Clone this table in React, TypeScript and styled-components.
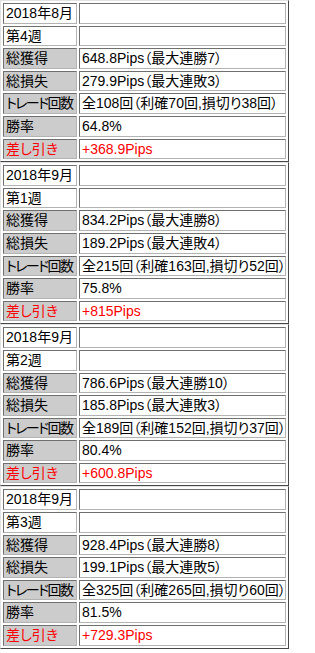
import React from 'react';
import styled, {createGlobalStyle} from 'styled-components';

type Week = {
  month: string;
  week: string;
  gain: string;
  loss: string;
  trades: string;
  rate: string;
  net: string;
};

const weeks: Week[] = [
  {
    month: '2018年8月',
    week: '第4週',
    gain: '648.8Pips（最大連勝7）',
    loss: '279.9Pips（最大連敗3）',
    trades: '全108回（利確70回,損切り38回）',
    rate: '64.8%',
    net: '+368.9Pips',
  },
  {
    month: '2018年9月',
    week: '第1週',
    gain: '834.2Pips（最大連勝8）',
    loss: '189.2Pips（最大連敗4）',
    trades: '全215回（利確163回,損切り52回）',
    rate: '75.8%',
    net: '+815Pips',
  },
  {
    month: '2018年9月',
    week: '第2週',
    gain: '786.6Pips（最大連勝10）',
    loss: '185.8Pips（最大連敗3）',
    trades: '全189回（利確152回,損切り37回）',
    rate: '80.4%',
    net: '+600.8Pips',
  },
  {
    month: '2018年9月',
    week: '第3週',
    gain: '928.4Pips（最大連勝8）',
    loss: '199.1Pips（最大連敗5）',
    trades: '全325回（利確265回,損切り60回）',
    rate: '81.5%',
    net: '+729.3Pips',
  },
];

const GlobalStyle = createGlobalStyle`
  html, body {
    margin: 0;
    padding: 0;
    background: #fff;
  }
  body {
    font-family: "Liberation Sans", "Noto Sans CJK JP", sans-serif;
    font-size: 14px;
    color: #000;
  }
`;

function WeekTable({data}: {data: Week}) {
  return (
    <Report.Table>
      <tbody>
        <tr>
          <Report.Label>{data.month}</Report.Label>
          <Report.Value />
        </tr>
        <tr>
          <Report.Label>{data.week}</Report.Label>
          <Report.Value />
        </tr>
        <tr>
          <Report.Label $shaded>総獲得</Report.Label>
          <Report.Value>{data.gain}</Report.Value>
        </tr>
        <tr>
          <Report.Label $shaded>総損失</Report.Label>
          <Report.Value>{data.loss}</Report.Value>
        </tr>
        <tr>
          <Report.Label $shaded $tight>
            トレード回数
          </Report.Label>
          <Report.Value>{data.trades}</Report.Value>
        </tr>
        <tr>
          <Report.Label $shaded>勝率</Report.Label>
          <Report.Value>{data.rate}</Report.Value>
        </tr>
        <tr>
          <Report.Label $shaded $red>
            差し引き
          </Report.Label>
          <Report.Value $red>{data.net}</Report.Value>
        </tr>
      </tbody>
    </Report.Table>
  );
}

export default function App() {
  return (
    <>
      <GlobalStyle />
      <Report.Page>
        {weeks.map((w, idx) => (
          <WeekTable key={idx} data={w} />
        ))}
      </Report.Page>
    </>
  );
}

const Report = {
  Page: styled.div`
    display: flex;
    flex-direction: column;
    width: 315px;
  `,
  Table: styled.table`
    width: 289px;
    table-layout: fixed;
    border-collapse: separate;
    border-spacing: 2px;
    border-style: solid;
    border-width: 1px;
    border-color: #e2e2e2 #474747 #474747 #e2e2e2;
  `,
  Label: styled.td<{$shaded?: boolean; $red?: boolean; $tight?: boolean}>`
    box-sizing: border-box;
    width: 74px;
    padding: 1px 1px 1px 2px;
    line-height: 16.6px;
    white-space: nowrap;
    overflow: hidden;
    font-feature-settings: 'palt';
    letter-spacing: ${(p) => (p.$tight ? '-1.6px' : '0')};
    border: 1px solid;
    border-color: #6f6f6f #b3b3b3 #b3b3b3 #6f6f6f;
    background: ${(p) => (p.$shaded ? '#cccccc' : '#ffffff')};
    color: ${(p) => (p.$red ? '#ff0000' : '#000000')};
  `,
  Value: styled.td<{$red?: boolean}>`
    padding: 1px 1px 1px 2px;
    line-height: 16.6px;
    white-space: nowrap;
    overflow: hidden;
    font-feature-settings: 'palt';
    border: 1px solid;
    border-color: #6f6f6f #b3b3b3 #b3b3b3 #6f6f6f;
    background: #ffffff;
    color: ${(p) => (p.$red ? '#ff0000' : '#000000')};
  `,
};
